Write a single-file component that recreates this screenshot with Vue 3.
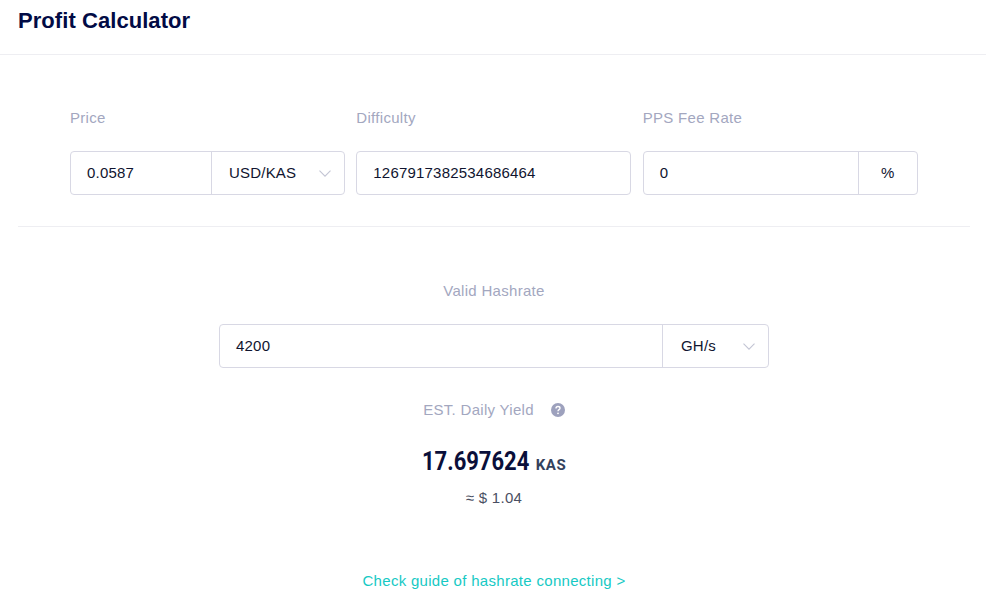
<script setup>
const fields = [
  { label: 'Price', value: '0.0587', unit: 'USD/KAS', select: true },
  { label: 'Difficulty', value: '1267917382534686464' },
  { label: 'PPS Fee Rate', value: '0', unit: '%' }
]
</script>

<template>
  <div class="page">
    <header class="head">
      <h1>Profit Calculator</h1>
    </header>
    <div class="body">
      <section class="params">
        <div v-for="f in fields" :key="f.label" class="field">
          <label>{{ f.label }}</label>
          <div class="box">
            <span class="val">{{ f.value }}</span>
            <span v-if="f.unit" class="unit" :class="{ select: f.select, plain: !f.select }">
              {{ f.unit }}
              <svg v-if="f.select" class="arrow" width="12" height="7" viewBox="0 0 12 7"><path d="M.5.7 6 6.2 11.500.7" /></svg>
            </span>
          </div>
        </div>
      </section>
      <section class="calc">
        <label class="hash-label">Valid Hashrate</label>
        <div class="box hash-box">
          <span class="val">4200</span>
          <span class="unit select ghs">
            GH/s
            <svg class="arrow" width="12" height="7" viewBox="0 0 12 7"><path d="M.5.7 6 6.2 11.500.7" /></svg>
          </span>
        </div>
        <div class="yield-label">
          <span>EST. Daily Yield</span>
          <svg width="14" height="14" viewBox="0 0 14 14">
            <circle cx="7" cy="7" r="7" fill="#9da1bd" />
            <path d="M5 5.400c0-1.200.9-1.900 2-1.900s2 .7 2 1.700c0 1.400-2 1.500-2 3" fill="none" stroke="#fff" stroke-width="1.400" />
            <circle cx="7" cy="10.300" r=".9" fill="#fff" />
          </svg>
        </div>
        <div class="amount"><span class="num">17.697624</span><small>KAS</small></div>
        <div class="usd">≈ $ 1.04</div>
        <a class="guide">Check guide of hashrate connecting &gt;</a>
      </section>
    </div>
  </div>
</template>

<style scoped>
.page {
  height: 615px;
  overflow: hidden;
  background: #fff;
  font-family: "Liberation Sans", Arial, sans-serif;
  font-size: 15px;
  letter-spacing: 0.3px;
  color: #0a0f2c;
}
.head {
  height: 54px;
  padding: 0 18px;
  border-bottom: 1px solid #eeeef2;
}
h1 {
  margin: 0;
  padding-top: 8px;
  font-size: 22px;
  line-height: 26px;
  font-weight: 700;
  letter-spacing: 0.06px;
  color: #020b45;
}
.body {
  margin: 0 16px 0 18px;
}
.params {
  display: grid;
  grid-template-columns: repeat(3, 275px);
  column-gap: 11.33px;
  padding: 53px 52px 31px;
  border-bottom: 1px solid #eeeef2;
}
label {
  display: block;
  line-height: 20px;
  color: #a3a7bf;
}
.field label {
  margin-bottom: 23px;
}
.box {
  display: flex;
  align-items: center;
  box-sizing: border-box;
  height: 44px;
  border: 1px solid #d8d8e4;
  border-radius: 4px;
}
.val {
  flex: 1;
  padding-left: 16px;
  line-height: 42px;
  letter-spacing: 0.2px;
  color: #10152f;
}
.unit {
  display: flex;
  align-items: center;
  box-sizing: border-box;
  height: 42px;
  padding-bottom: 2px;
  border-left: 1px solid #d8d8e4;
  letter-spacing: 0.2px;
  color: #10152f;
}
.select {
  width: 133px;
  padding-left: 17px;
  position: relative;
}
.plain {
  width: 59px;
  justify-content: center;
}
.arrow {
  position: absolute;
  right: 13px;
  top: 18px;
}
.arrow path {
  fill: none;
  stroke: #c3c5d4;
  stroke-width: 1.1;
}
.calc {
  display: flex;
  flex-direction: column;
  align-items: center;
  padding-top: 54px;
}
.hash-label {
  margin-bottom: 23px;
}
.hash-box {
  width: 550px;
}
.ghs {
  width: 106px;
  padding-left: 18px;
}
.yield-label {
  display: flex;
  align-items: center;
  gap: 17px;
  margin-top: 32px;
  line-height: 20px;
  color: #a3a7bf;
}
.amount {
  margin-top: 26px;
  line-height: 32px;
  letter-spacing: 0;
}
.num {
  display: inline-block;
  margin-right: -8px;
  font-family: Roboto, sans-serif;
  font-size: 25px;
  font-weight: 700;
  color: #0a0f3a;
  transform: scaleX(0.88);
  transform-origin: left center;
}
.amount small {
  font-family: Roboto, sans-serif;
  font-size: 15px;
  font-weight: 700;
  letter-spacing: 0.5px;
  color: #33415c;
}
.usd {
  margin-top: 7px;
  line-height: 20px;
  color: #4a4f63;
}
.guide {
  margin-top: 63px;
  line-height: 20px;
  color: #16c9c4;
}
</style>
